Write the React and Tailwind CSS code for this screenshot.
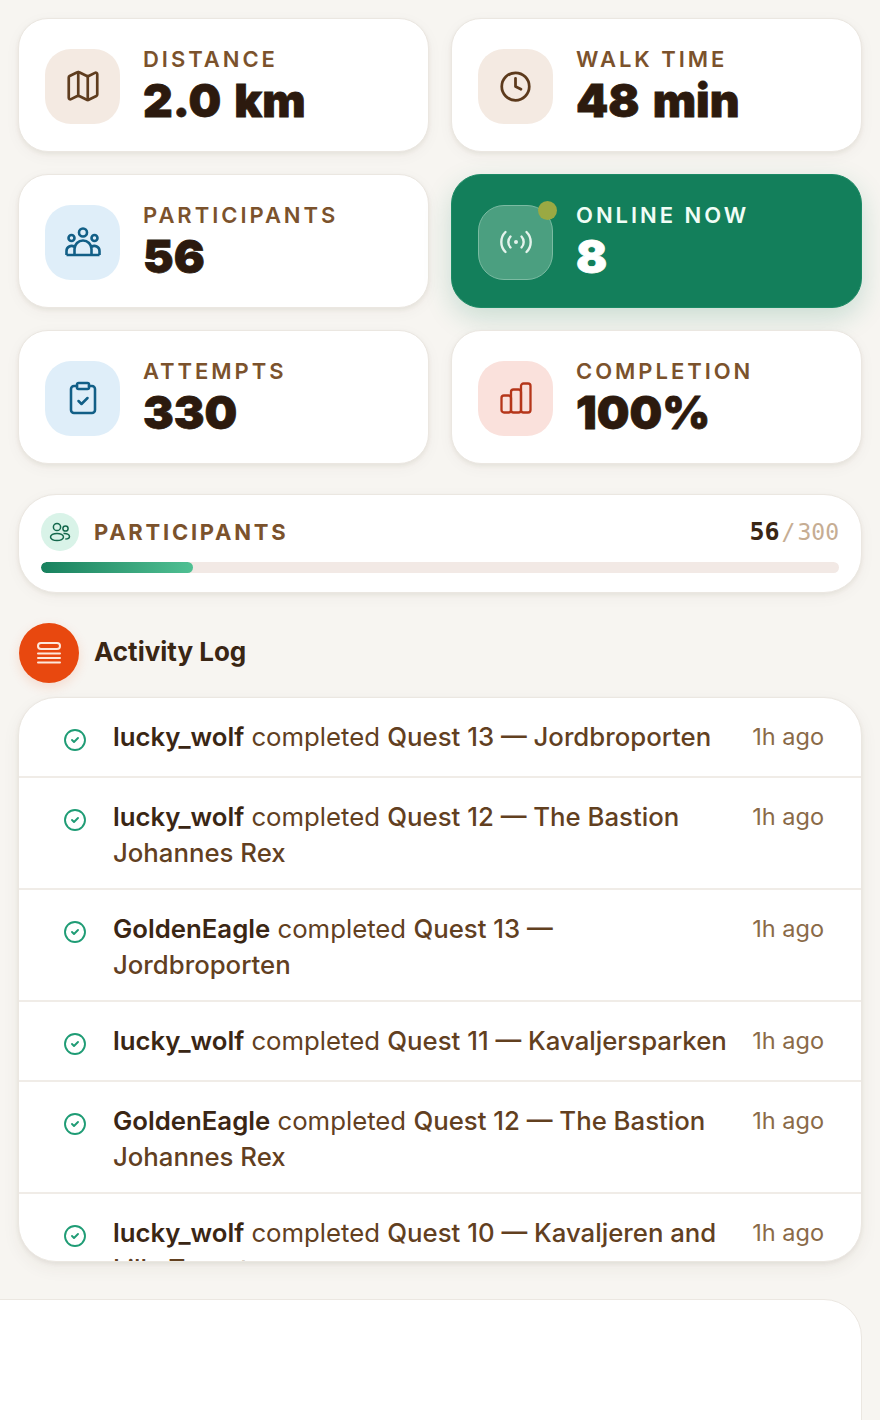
import { Map, Clock, ClipboardCheck, CircleCheck } from 'lucide-react'

const GroupSmall = () => (
  <svg width="24" height="24" viewBox="0 0 24 24" fill="none" stroke="#14684c" strokeWidth="1.5">
    <circle cx="9" cy="7" r="3.6" />
    <circle cx="17.5" cy="8.5" r="2.6" />
    <ellipse cx="9" cy="17" rx="6.5" ry="3.6" />
    <path d="M15.5 13.6c3.2-.5 6 .9 6 2.900 0 1.500-1.700 2.500-4.200 2.500" />
  </svg>
)

const GroupIcon = () => (
  <svg width="36" height="30" viewBox="0 0 36 30" fill="none" stroke="#125f87" strokeWidth="2.600" strokeLinejoin="round">
    <circle cx="18" cy="5.500" r="4" />
    <circle cx="6.500" cy="11" r="3" />
    <circle cx="29.500" cy="11" r="3" />
    <path d="M1.500 28h33" />
    <path d="M1.500 28v-4a5 5 0 0 1 8-4" />
    <path d="M9.500 28v-6a8.500 8.500 0 0 1 17 0v6" />
    <path d="M34.500 28v-4a5 5 0 0 0-8-4" />
  </svg>
)

const SignalIcon = () => (
  <svg width="32" height="24" viewBox="0 0 32 24" fill="none" stroke="#e4f3ec" strokeWidth="2.400" strokeLinecap="round">
    <circle cx="16" cy="12" r="2" fill="#e4f3ec" stroke="none" />
    <path d="M10.500 6.500a8 8 0 0 0 0 11" />
    <path d="M21.500 6.500a8 8 0 0 1 0 11" />
    <path d="M5.500 2a14 14 0 0 0 0 20" />
    <path d="M26.500 2a14 14 0 0 1 0 20" />
  </svg>
)

const BarsIcon = () => (
  <svg width="32" height="32" viewBox="0 0 32 32" fill="none" stroke="#b5361a" strokeWidth="2.300">
    <rect x="1.500" y="13.500" width="9.500" height="17" rx="2.500" />
    <rect x="11" y="7.500" width="10" height="23" rx="2.500" />
    <rect x="21" y="1.500" width="9.500" height="29" rx="2.500" />
  </svg>
)

const LogIcon = () => (
  <svg width="26" height="24" viewBox="0 0 26 24" fill="none" stroke="#fde8dc" strokeWidth="2" strokeLinecap="round">
    <rect x="2" y="2" width="22" height="6" rx="3" />
    <path d="M2 12.500h22M2 17h22M2 21.500h22" />
  </svg>
)

const Stat = ({ icon, label, value, tone, online }) => (
  <div
    className={
      online
        ? 'h-[134px] rounded-[30px] bg-[#137f5b] border border-[#1c8a65] flex items-center pl-[26px] shadow-[0_10px_28px_rgba(19,127,91,0.2)]'
        : 'h-[134px] rounded-[30px] bg-white border border-[#ebe7e1] flex items-center pl-[26px] shadow-[0_2px_4px_rgba(70,50,30,0.07),0_4px_16px_rgba(70,50,30,0.04)]'
    }
  >
    <div className={`relative mt-[2px] w-[75px] h-[75px] rounded-[26px] flex items-center justify-center shrink-0 ${tone}`}>
      {icon}
      {online && <span className="absolute -top-[5px] -right-[5px] w-[19px] h-[19px] rounded-full bg-[#9aa943]" />}
    </div>
    <div className="ml-[23px]">
      <div className={`text-[22px] leading-[30px] font-semibold tracking-[0.135em] ${online ? 'text-[#f0fdf6]' : 'text-[#7b522c]'}`}>{label}</div>
      <div className={`text-[46px] leading-[52px] font-black [word-spacing:4px] [-webkit-text-stroke:0.8px_currentColor] ${online ? 'text-white' : 'text-[#2c1a0e]'}`}>{value}</div>
    </div>
  </div>
)

const rows = [
  { user: 'lucky_wolf', quest: 'Quest 13 — Jordbroporten' },
  { user: 'lucky_wolf', quest: 'Quest 12 — The Bastion Johannes Rex' },
  { user: 'GoldenEagle', quest: 'Quest 13 — Jordbroporten' },
  { user: 'lucky_wolf', quest: 'Quest 11 — Kavaljersparken' },
  { user: 'GoldenEagle', quest: 'Quest 12 — The Bastion Johannes Rex' },
  { user: 'lucky_wolf', quest: 'Quest 10 — Kavaljeren and Lilla Tornet' },
]

export default function App() {
  return (
    <div className="h-[1420px] overflow-hidden bg-[#f7f5f1] pt-[18px] px-[18px] font-['Inter',sans-serif]">
      <div className="grid grid-cols-2 gap-[22px]">
        <Stat icon={<Map size={38} color="#5f3d1f" strokeWidth={1.7} />} label="DISTANCE" value="2.0 km" tone="bg-[#f4eae2]" />
        <Stat icon={<Clock size={33} color="#5c3a1c" strokeWidth={2} />} label="WALK TIME" value="48 min" tone="bg-[#f4eae2]" />
        <Stat icon={<GroupIcon />} label="PARTICIPANTS" value="56" tone="bg-[#dfeef9]" />
        <Stat icon={<SignalIcon />} label="ONLINE NOW" value="8" tone="bg-[#4b9f80] border border-[#7bbba2]" online />
        <Stat icon={<ClipboardCheck size={36} color="#125f87" strokeWidth={1.7} />} label="ATTEMPTS" value="330" tone="bg-[#dfeef9]" />
        <Stat icon={<BarsIcon />} label="COMPLETION" value="100%" tone="bg-[#fae1dc]" />
      </div>

      <div className="mt-[30px] h-[99px] rounded-[38px] bg-white border border-[#ebe7e1] px-[22px] pt-[18px] shadow-[0_2px_4px_rgba(70,50,30,0.07),0_4px_16px_rgba(70,50,30,0.04)]">
        <div className="flex items-center h-[38px]">
          <div className="w-[38px] h-[38px] rounded-full bg-[#d9f3e8] flex items-center justify-center">
            <GroupSmall />
          </div>
          <div className="ml-[15px] text-[22px] font-bold tracking-[0.125em] text-[#7b522c]">PARTICIPANTS</div>
          <div className="ml-auto flex items-baseline font-['DejaVu_Sans_Mono',monospace]">
            <span className="text-[25px] font-bold text-[#3a2614]">56</span>
            <span className="text-[23px] text-[#c6ad93] ml-[2px]">/</span>
            <span className="text-[23px] text-[#c6ad93] ml-[2px]">300</span>
          </div>
        </div>
        <div className="mt-[11px] h-[11px] rounded-full bg-[#f2e9e5] overflow-hidden">
          <div className="h-full w-[19%] rounded-full bg-gradient-to-r from-[#17815e] to-[#4fc093]" />
        </div>
      </div>

      <div className="mt-[30px] ml-[1px] flex items-center">
        <div className="w-[60px] h-[60px] rounded-full bg-[#e8480f] flex items-center justify-center shadow-[0_4px_12px_rgba(232,72,15,0.15)]">
          <LogIcon />
        </div>
        <div className="ml-[15px] -mt-[4px] text-[26px] font-bold text-[#3a2614]">Activity Log</div>
      </div>

      <div className="mt-[14px] h-[565px] overflow-hidden rounded-[38px] bg-white border border-[#ebe7e1] shadow-[0_2px_4px_rgba(70,50,30,0.07),0_6px_18px_rgba(70,50,30,0.06)]">
        {rows.map((r, i) => (
          <div key={i} className="flex min-h-[80px] pl-[44px] pr-[37px] pt-[21px] pb-[17px] border-b-2 border-[#f0ece7] text-[25.75px] leading-[36px] text-[#62401f]">
            <CircleCheck size={24} color="#1f9c75" strokeWidth={1.9} className="mt-[9px] shrink-0" />
            <div className="ml-[26px] flex-1 pr-[19px]">
              <span className="font-semibold text-[#3a2614]">{r.user}</span> completed <span className="font-medium">{r.quest}</span>
            </div>
            <div className="text-[23.5px] text-[#8a6a48] shrink-0">1h ago</div>
          </div>
        ))}
      </div>

      <div className="mt-[37px] -ml-[60px] h-[200px] rounded-[38px] bg-white border border-[#ebe7e1]" />
    </div>
  )
}
